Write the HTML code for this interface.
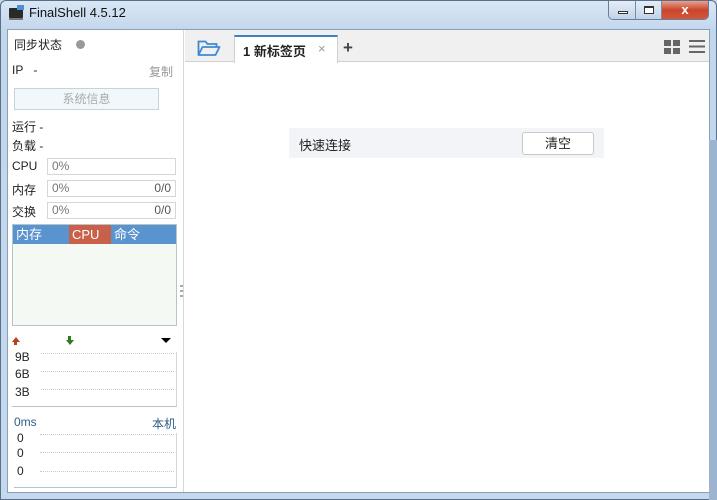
<!DOCTYPE html>
<html><head><meta charset="utf-8"><style>
*{margin:0;padding:0;box-sizing:border-box}
body{width:717px;height:500px;overflow:hidden;background:#c4d8ee;font-family:"Liberation Sans","Noto Sans CJK SC",sans-serif;font-size:12px;color:#222;position:relative}
.a{position:absolute}
.frame{left:0;top:0;width:717px;height:500px;border:1px solid #5a6f88;border-radius:6px 6px 0 0;background:linear-gradient(#d9e7f5,#c2d6ec 30px,#c4d8ee)}
.client{left:7px;top:29px;width:703px;height:464px;background:#fff;border:1px solid #8aa0b8}
.left{left:8px;top:30px;width:176px;height:462px;background:#fff;border-right:1px solid #d8d8d8}
.lbl{font-size:12px}
.box{border:1px solid #d6d6d6;height:17px;color:#777;font-size:12px;line-height:15px;padding:0 4px}
.dot{border-top:1px dotted #c8c8c8;height:0}
</style></head><body>
<div class="a frame"></div>
<div class="a" style="left:9px;top:8px;width:14px;height:10px;background:#2a2a2a;border-radius:1px"></div>
<div class="a" style="left:17px;top:5px;width:7px;height:5px;background:#4d8fd6"></div>
<div class="a" style="left:9px;top:18px;width:14px;height:2px;background:#777"></div>
<div class="a" style="left:29px;top:5px;font-size:13px;color:#111">FinalShell 4.5.12</div>
<div class="a" style="left:608px;top:1px;width:101px;height:19px;border:1px solid #6a7d95;border-top:none;border-radius:0 0 5px 5px;overflow:hidden;display:flex">
<div style="width:27px;background:linear-gradient(#e4edf7,#c2d3e8);border-right:1px solid #7a8ca5;position:relative"><div class="a" style="left:9px;top:10px;width:10px;height:3px;border:1px solid #333;background:#fff"></div></div>
<div style="width:26px;background:linear-gradient(#e4edf7,#c2d3e8);border-right:1px solid #7a8ca5;position:relative"><div class="a" style="left:8px;top:5px;width:10px;height:8px;border:1px solid #333;border-top-width:2px;background:#fff"></div></div>
<div style="flex:1;background:linear-gradient(#e8a290,#c9462c 50%,#d2573b);color:#fff;text-align:center;font-weight:bold;font-size:13px;line-height:17px">x</div>
</div>
<div class="a client"></div>
<div class="a left"></div>
<div class="a lbl" style="left:14px;top:36px">同步状态</div>
<div class="a" style="left:76px;top:40px;width:9px;height:9px;border-radius:50%;background:#999"></div>
<div class="a lbl" style="left:12px;top:63px">IP&nbsp;&nbsp;&nbsp;-</div>
<div class="a lbl" style="left:149px;top:63px;color:#999">复制</div>
<div class="a" style="left:14px;top:88px;width:145px;height:22px;border:1px solid #c8d2dc;background:#f1f8fc;color:#aaa;text-align:center;line-height:20px">系统信息</div>
<div class="a lbl" style="left:12px;top:118px">运行 -</div>
<div class="a lbl" style="left:12px;top:137px">负载 -</div>
<div class="a lbl" style="left:12px;top:159px">CPU</div>
<div class="a box" style="left:47px;top:158px;width:129px">0%</div>
<div class="a lbl" style="left:12px;top:181px">内存</div>
<div class="a box" style="left:47px;top:180px;width:129px">0%<span style="float:right;color:#555">0/0</span></div>
<div class="a lbl" style="left:12px;top:203px">交换</div>
<div class="a box" style="left:47px;top:202px;width:129px">0%<span style="float:right;color:#555">0/0</span></div>
<div class="a" style="left:12px;top:224px;width:165px;height:102px;border:1px solid #b8c4cc;background:#f4f9f4"></div>
<div class="a" style="left:13px;top:225px;width:163px;height:19px;background:#5a94cf;color:#fff;font-size:13px;line-height:19px">
<span class="a" style="left:3px">内存</span><span class="a" style="left:56px;width:42px;height:19px;background:#c9614a;padding-left:3px">CPU</span><span class="a" style="left:101px">命令</span></div>
<div class="a" style="left:180px;top:285px;width:3px;height:14px;background:repeating-linear-gradient(#aaa 0 2px,transparent 2px 5px)"></div>
<div class="a" style="left:12px;top:337px;width:0;height:0;border-left:4px solid transparent;border-right:4px solid transparent;border-bottom:5px solid #b5431b"></div>
<div class="a" style="left:14px;top:341px;width:3px;height:4px;background:#b5431b"></div>
<div class="a" style="left:68px;top:336px;width:3px;height:4px;background:#2e7a20"></div>
<div class="a" style="left:66px;top:340px;width:0;height:0;border-left:4px solid transparent;border-right:4px solid transparent;border-top:5px solid #2e7a20"></div>
<div class="a" style="left:161px;top:338px;width:0;height:0;border-left:5px solid transparent;border-right:5px solid transparent;border-top:5px solid #000"></div>
<div class="a" style="left:12px;top:352px;width:165px;height:55px;border-right:1px solid #d0d8de;border-bottom:1px solid #b8c4cc"></div>
<div class="a lbl" style="left:15px;top:350px">9B</div><div class="a dot" style="left:41px;top:353px;width:133px"></div>
<div class="a lbl" style="left:15px;top:367px">6B</div><div class="a dot" style="left:41px;top:371px;width:133px"></div>
<div class="a lbl" style="left:15px;top:385px">3B</div><div class="a dot" style="left:41px;top:389px;width:133px"></div>
<div class="a lbl" style="left:14px;top:415px;color:#2d5d8a">0ms</div>
<div class="a lbl" style="left:152px;top:415px;color:#2d5d8a">本机</div>
<div class="a" style="left:14px;top:433px;width:163px;height:55px;border-right:1px solid #d0d8de;border-bottom:1px solid #b8c4cc"></div>
<div class="a lbl" style="left:17px;top:431px">0</div><div class="a dot" style="left:40px;top:434px;width:134px"></div>
<div class="a lbl" style="left:17px;top:446px">0</div><div class="a dot" style="left:40px;top:452px;width:134px"></div>
<div class="a lbl" style="left:17px;top:464px">0</div><div class="a dot" style="left:40px;top:471px;width:134px"></div>
<div class="a" style="left:185px;top:30px;width:524px;height:32px;background:#f0f0f0;border-bottom:1px solid #d0d0d0"></div>
<svg class="a" style="left:197px;top:39px" width="24" height="18" viewBox="0 0 24 18"><path d="M1.5 16V2.5h7l2 2.5h9v3" fill="none" stroke="#3d8ad0" stroke-width="1.8"/><path d="M1.5 16L5.5 8h17l-4 8z" fill="none" stroke="#3d8ad0" stroke-width="1.8" stroke-linejoin="round"/></svg>
<div class="a" style="left:234px;top:35px;width:104px;height:28px;background:#fff;border:1px solid #d0d0d0;border-bottom:none;border-top:2px solid #3b83c0"></div>
<div class="a" style="left:243px;top:41px;font-size:13px;font-weight:bold;color:#222">1 新标签页</div>
<div class="a" style="left:318px;top:41px;font-size:13px;color:#999">×</div>
<div class="a" style="left:343px;top:38px;font-size:17px;font-weight:bold;color:#444">+</div>
<div class="a" style="left:664px;top:40px;width:16px;height:14px;background:linear-gradient(90deg,#666 7px,transparent 7px 9px,#666 9px);-webkit-mask:linear-gradient(#000 6px,transparent 6px 8px,#000 8px);mask:linear-gradient(#000 6px,transparent 6px 8px,#000 8px)"></div>
<div class="a" style="left:689px;top:40px;width:16px;height:13px;background:linear-gradient(#666 2px,transparent 2px 5.5px,#666 5.5px 7.5px,transparent 7.5px 11px,#666 11px 13px)"></div>
<div class="a" style="left:709px;top:140px;width:8px;height:360px;background:#9cb4cf"></div>
<div class="a" style="left:289px;top:128px;width:315px;height:30px;background:#f2f4f7"></div>
<div class="a" style="left:299px;top:135px;font-size:13px">快速连接</div>
<div class="a" style="left:522px;top:132px;width:72px;height:23px;background:#fff;border:1px solid #c8c8c8;border-radius:3px;text-align:center;line-height:21px;font-size:13px">清空</div>
</body></html>
